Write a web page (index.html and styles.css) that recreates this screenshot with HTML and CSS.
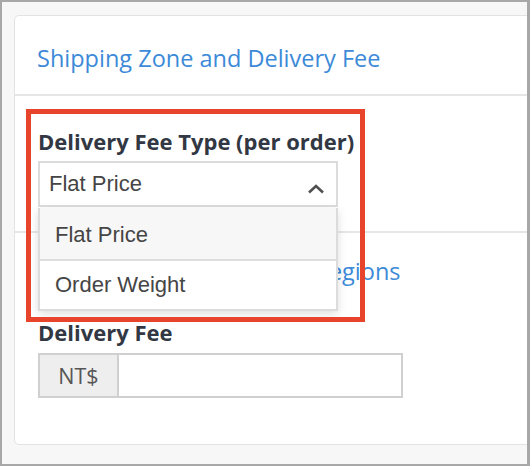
FILE: index.html
```html
<!DOCTYPE html>
<html>
<head>
<meta charset="utf-8">
<link rel="stylesheet" href="styles.css">
</head>
<body>
<div class="frame">
  <div class="card">
    <div class="card-header">
      <h2 class="card-title">Shipping Zone and Delivery Fee</h2>
    </div>
    <div class="section section-type">
      <label class="field-label">Delivery Fee Type (per order)</label>
      <div class="select">
        <span class="select-value">Flat Price</span>
        <svg class="chevron" width="18" height="10" viewBox="0 0 18 10"><path d="M2 8.5 L9 2 L16 8.5" fill="none" stroke="#505050" stroke-width="2.6"/></svg>
      </div>
    </div>
    <div class="section section-fee">
      <a class="link">Shipping To Countries or Regions</a>
      <label class="field-label">Delivery Fee</label>
      <div class="input-group">
        <span class="addon">NT$</span>
        <span class="input"></span>
      </div>
    </div>
  </div>
  <ul class="menu">
    <li class="option active">Flat Price</li>
    <li class="option">Order Weight</li>
  </ul>
  <div class="highlight"></div>
</div>
</body>
</html>
```
FILE: styles.css
```css
* { box-sizing: border-box; }
html, body { margin: 0; padding: 0; }
body { width: 530px; height: 466px; overflow: hidden; font-family: "Open Sans", sans-serif; }
.frame {
  position: relative;
  width: 530px;
  height: 466px;
  border: 2px solid #a8a8a8;
  border-right-width: 3px;
  background: #f7f7f7;
  padding: 13px 0 0 12px;
  overflow: hidden;
}
.card {
  width: 540px;
  height: 430px;
  background: #fff;
  border: 1px solid #e3e3e3;
  border-radius: 5px;
}
.card-header {
  height: 80px;
  border-bottom: 2px solid #e6e6e6;
  padding: 26px 0 0 22px;
}
.card-title {
  margin: 0;
  font-weight: 400;
  font-size: 23.5px;
  line-height: 32px;
  color: #3c8ad8;
}
.section { padding: 0 0 0 23px; }
.section-type {
  height: 137px;
  border-bottom: 2px solid #e6e6e6;
  padding-top: 30px;
}
.field-label {
  display: block;
  font-weight: 700;
  font-size: 22px;
  line-height: 30px;
  color: #323843;
}
.select {
  margin-top: 5px;
  width: 300px;
  height: 46px;
  border: 2px solid #dcdcdc;
  display: flex;
  align-items: center;
  justify-content: space-between;
  padding: 0 11px 0 9px;
}
.select-value {
  font-family: "Liberation Sans", Arial, sans-serif;
  font-size: 22px;
  color: #454545;
}
.chevron { margin-top: 10px; }
.section-fee { padding-top: 22px; }
.link {
  display: block;
  font-size: 23.5px;
  line-height: 32px;
  color: #3c8ad8;
  white-space: nowrap;
}
.section-fee .field-label { margin-top: 30px; }
.input-group {
  margin-top: 6px;
  display: flex;
  width: 365px;
  height: 45px;
  border: 2px solid #d0d0d0;
}
.addon {
  width: 79px;
  background: #eeeeee;
  border-right: 2px solid #d0d0d0;
  display: flex;
  align-items: center;
  justify-content: center;
  font-size: 21.5px;
  color: #555;
}
.input { flex: 1; background: #fff; }
.menu {
  position: absolute;
  left: 36px;
  top: 206px;
  width: 300px;
  margin: 0;
  padding: 0;
  list-style: none;
  background: #fff;
  border: 2px solid #dcdcdc;
  border-top: none;
  box-shadow: 0 3px 9px rgba(0,0,0,0.13);
}
.option {
  height: 48px;
  display: flex;
  align-items: center;
  padding-left: 15px;
  font-family: "Liberation Sans", Arial, sans-serif;
  font-size: 22px;
  color: #454545;
}
.option.active {
  background: #f7f7f7;
  border-bottom: 2px solid #dedede;
  height: 53px;
  padding-top: 2px;
}
.highlight {
  position: absolute;
  left: 24px;
  top: 107px;
  width: 339px;
  height: 213px;
  border: 5px solid #e8432b;
}
```
